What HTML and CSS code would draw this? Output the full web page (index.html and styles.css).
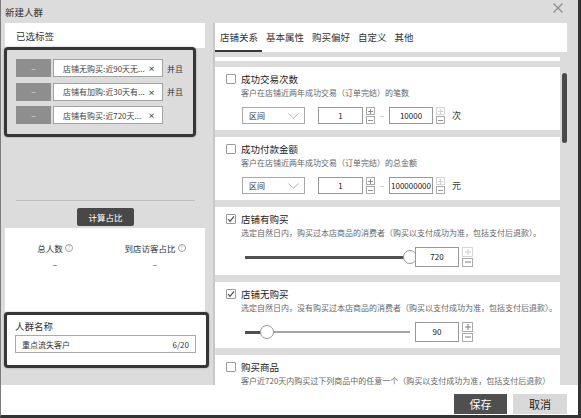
FILE: index.html
```html
<!DOCTYPE html>
<html lang="zh-CN">
<head>
<meta charset="utf-8">
<title>新建人群</title>
<link rel="stylesheet" href="styles.css">
</head>
<body>
<div class="window">
  <header class="titlebar">
    <span class="title">新建人群</span>
    <svg class="close" width="10" height="10" viewBox="0 0 10 10"><path d="M0.5 0.5L9.5 9.5M9.5 0.5L0.5 9.5" stroke="#8a8a8a" stroke-width="1.1" fill="none"/></svg>
  </header>

  <div class="main">
    <aside class="left">
      <div class="left-head">已选标签</div>
      <div class="tags-area">
        <div class="tag-box">
          <div class="tag-row">
            <span class="minus">–</span>
            <span class="tag"><span>店铺无购买:近90天无...</span><b class="x">×</b></span>
            <span class="and">并且</span>
          </div>
          <div class="tag-row">
            <span class="minus">–</span>
            <span class="tag"><span>店铺有加购:近30天有...</span><b class="x">×</b></span>
            <span class="and">并且</span>
          </div>
          <div class="tag-row">
            <span class="minus">–</span>
            <span class="tag"><span>店铺有购买:近720天...</span><b class="x">×</b></span>
          </div>
        </div>
        <div class="calc">
          <button class="calc-btn">计算占比</button>
        </div>
      </div>
      <div class="stats">
        <div class="stat">
          <div class="stat-label">总人数 <span class="help">?</span></div>
          <div class="stat-val">–</div>
        </div>
        <div class="stat">
          <div class="stat-label">到店访客占比 <span class="help">?</span></div>
          <div class="stat-val">–</div>
        </div>
      </div>
      <div class="name-box">
        <div class="name-label">人群名称</div>
        <div class="name-input"><span>重点流失客户</span><span>6/20</span></div>
      </div>
    </aside>

    <section class="right">
      <nav class="tabs">
        <span class="tab active">店铺关系</span>
        <span class="tab">基本属性</span>
        <span class="tab">购买偏好</span>
        <span class="tab">自定义</span>
        <span class="tab">其他</span>
      </nav>
      <div class="scroller">
        <div class="cards">
          <div class="tail"></div>

          <div class="card c1">
            <div class="card-head"><span class="cb"></span><span class="card-title">成功交易次数</span></div>
            <div class="desc">客户在店铺近两年成功交易（订单完结）的笔数</div>
            <div class="ctrl">
              <span class="select"><span>区间</span><svg width="11" height="6" viewBox="0 0 11 6"><polyline points="0.5,0.5 5.5,5.2 10.5,0.5" fill="none" stroke="#a8a8a8" stroke-width="0.9"/></svg></span>
              <span class="num first">1</span>
              <span class="spin"><span class="sb"><svg viewBox="0 0 5 5"><path d="M0 2.5H5M2.5 0V5" stroke="currentColor" stroke-width="0.8"/></svg></span><span class="sb"><svg viewBox="0 0 5 5"><path d="M0 2.5H5" stroke="currentColor" stroke-width="0.8"/></svg></span></span>
              <span class="dash">–</span>
              <span class="num">10000</span>
              <span class="spin"><span class="sb off"><svg viewBox="0 0 5 5"><path d="M0 2.5H5M2.5 0V5" stroke="currentColor" stroke-width="0.8"/></svg></span><span class="sb"><svg viewBox="0 0 5 5"><path d="M0 2.5H5" stroke="currentColor" stroke-width="0.8"/></svg></span></span>
              <span class="unit">次</span>
            </div>
          </div>

          <div class="card c2">
            <div class="card-head"><span class="cb"></span><span class="card-title">成功付款金额</span></div>
            <div class="desc">客户在店铺近两年成功交易（订单完结）的总金额</div>
            <div class="ctrl">
              <span class="select"><span>区间</span><svg width="11" height="6" viewBox="0 0 11 6"><polyline points="0.5,0.5 5.5,5.2 10.5,0.5" fill="none" stroke="#a8a8a8" stroke-width="0.9"/></svg></span>
              <span class="num first">1</span>
              <span class="spin"><span class="sb"><svg viewBox="0 0 5 5"><path d="M0 2.5H5M2.5 0V5" stroke="currentColor" stroke-width="0.8"/></svg></span><span class="sb"><svg viewBox="0 0 5 5"><path d="M0 2.5H5" stroke="currentColor" stroke-width="0.8"/></svg></span></span>
              <span class="dash">–</span>
              <span class="num">100000000</span>
              <span class="spin"><span class="sb off"><svg viewBox="0 0 5 5"><path d="M0 2.5H5M2.5 0V5" stroke="currentColor" stroke-width="0.8"/></svg></span><span class="sb"><svg viewBox="0 0 5 5"><path d="M0 2.5H5" stroke="currentColor" stroke-width="0.8"/></svg></span></span>
              <span class="unit">元</span>
            </div>
          </div>

          <div class="card c3">
            <div class="card-head"><span class="cb on"><svg width="8" height="8" viewBox="0 0 8 8"><polyline points="1,4 3,6.3 7,1.3" fill="none" stroke="#444" stroke-width="1.1"/></svg></span><span class="card-title">店铺有购买</span></div>
            <div class="desc">选定自然日内，购买过本店商品的消费者（购买以支付成功为准，包括支付后退款）。</div>
            <div class="slider">
              <span class="track"><span class="fill" style="width:100%"></span><span class="knob" style="left:100%"></span></span>
              <span class="sl-input">720</span>
              <span class="spin big"><span class="sb off"><svg viewBox="0 0 5 5"><path d="M0 2.5H5M2.5 0V5" stroke="currentColor" stroke-width="0.8"/></svg></span><span class="sb"><svg viewBox="0 0 5 5"><path d="M0 2.5H5" stroke="currentColor" stroke-width="0.8"/></svg></span></span>
            </div>
          </div>

          <div class="card c4">
            <div class="card-head"><span class="cb on"><svg width="8" height="8" viewBox="0 0 8 8"><polyline points="1,4 3,6.3 7,1.3" fill="none" stroke="#444" stroke-width="1.1"/></svg></span><span class="card-title">店铺无购买</span></div>
            <div class="desc">选定自然日内，没有购买过本店商品的消费者（购买以支付成功为准，包括支付后退款）。</div>
            <div class="slider">
              <span class="track"><span class="fill" style="width:17px"></span><span class="knob" style="left:22px"></span></span>
              <span class="sl-input">90</span>
              <span class="spin big"><span class="sb"><svg viewBox="0 0 5 5"><path d="M0 2.5H5M2.5 0V5" stroke="currentColor" stroke-width="0.8"/></svg></span><span class="sb"><svg viewBox="0 0 5 5"><path d="M0 2.5H5" stroke="currentColor" stroke-width="0.8"/></svg></span></span>
            </div>
          </div>

          <div class="card c5">
            <div class="card-head"><span class="cb"></span><span class="card-title">购买商品</span></div>
            <div class="desc">客户近720天内购买过下列商品中的任意一个（购买以支付成功为准，包括支付后退款）</div>
          </div>
        </div>
        <div class="thumb"></div>
      </div>
    </section>
  </div>

  <footer class="footer">
    <button class="btn save">保存</button>
    <button class="btn cancel">取消</button>
  </footer>
</div>
</body>
</html>
```

FILE: styles.css
```css
* { box-sizing: border-box; margin: 0; padding: 0; }

body {
  width: 581px;
  height: 418px;
  overflow: hidden;
  font-family: "Noto Sans CJK SC", "Noto Sans", sans-serif;
  color: #333;
  background: #dcdcdc;
}

.window {
  width: 581px;
  height: 418px;
  display: flex;
  flex-direction: column;
  background: #dcdcdc;
  border-left: 1px solid #7c7c7c;
  border-right: 3px solid #333;
  border-bottom: 3px solid #333;
}

/* title bar */
.titlebar {
  height: 23px;
  flex-shrink: 0;
  display: flex;
  justify-content: space-between;
  align-items: center;
  padding: 0 15px 0 4px;
  font-size: 9.5px;
  color: #333;
}
.close { align-self: flex-start; margin-top: 3px; }

/* main */
.main {
  flex: 1;
  display: flex;
  min-height: 0;
}

/* left panel */
.left {
  width: 200px;
  margin-left: 4px;
  display: flex;
  flex-direction: column;
}
.left-head {
  height: 25px;
  background: #fff;
  padding-left: 11px;
  font-size: 9.5px;
  line-height: 26px;
  color: #333;
}
.tags-area {
  height: 180px;
  display: flex;
  flex-direction: column;
}
.tag-box {
  margin: -1px 9px 0 -1px;
  height: 90px;
  border: 3px solid #363636;
  border-radius: 4px;
  box-shadow: 0 0 2px rgba(0,0,0,0.35);
  padding: 9px 0 0 9px;
  display: flex;
  flex-direction: column;
  gap: 5.5px;
}
.tag-row {
  display: flex;
  align-items: center;
  height: 18px;
}
.minus {
  width: 35px;
  height: 18px;
  background: #8e8e8e;
  color: #e8e8e8;
  font-size: 8px;
  display: flex;
  align-items: center;
  justify-content: center;
}
.tag {
  margin-left: 2px;
  width: 110px;
  height: 18px;
  background: #fff;
  border: 1px solid #a3a3a3;
  display: flex;
  align-items: center;
  justify-content: space-between;
  padding: 0 7px 0 9px;
  font-size: 8px;
  white-space: nowrap;
  color: #444;
}
.x { font-size: 7px; font-weight: bold; color: #444; }
.and { margin-left: 4px; font-size: 8px; color: #333; }

.calc {
  margin: 63px 10px 0 11px;
  border-top: 1px solid #bdbdbd;
  padding-top: 7px;
  display: flex;
  justify-content: center;
}
.calc-btn {
  width: 57px;
  height: 18px;
  border: 0;
  border-radius: 2px;
  background: #484848;
  color: #fff;
  font-family: inherit;
  font-size: 8.5px;
}

.stats {
  height: 84px;
  background: #fff;
  display: flex;
  padding-top: 14px;
}
.stat { width: 100px; text-align: center; }
.stat-label {
  font-size: 8.5px;
  line-height: 12px;
  display: flex;
  align-items: center;
  justify-content: center;
  gap: 2px;
  color: #333;
}
.help {
  width: 8px;
  height: 8px;
  border: 1px solid #a0a0a0;
  border-radius: 50%;
  font-size: 5.5px;
  line-height: 6px;
  color: #999;
  text-align: center;
}
.stat-val {
  margin-top: 5px;
  font-size: 9px;
  line-height: 12px;
  color: #555;
}

.name-box {
  height: 56px;
  margin: 0 -4px 0 -1px;
  border: 3px solid #363636;
  border-radius: 4px;
  box-shadow: 0 0 2px rgba(0,0,0,0.35);
  background: #fff;
  padding: 5px 10px 0 8px;
}
.name-label { font-size: 9.5px; line-height: 12px; color: #333; }
.name-input {
  margin-top: 3px;
  height: 18px;
  border: 1px solid #aaa;
  display: flex;
  align-items: center;
  justify-content: space-between;
  padding: 0 6px;
  font-size: 8px;
  color: #333;
}

/* right panel */
.right {
  flex: 1;
  margin-left: 8px;
  border-left: 2px solid #c8c8c8;
  display: flex;
  flex-direction: column;
  min-width: 0;
}
.tabs {
  width: 352px;
  height: 29px;
  flex-shrink: 0;
  background: #fff;
  display: flex;
}
.tab {
  padding: 0 4px;
  font-size: 9.5px;
  line-height: 29px;
  color: #333;
  white-space: nowrap;
}
.tab:first-child { padding-left: 5px; }
.tab.active { box-shadow: inset 0 -2px 0 #3a3a3a; }

.scroller {
  flex: 1;
  position: relative;
  overflow: hidden;
}
.cards {
  width: 345px;
  padding-top: 5px;
  display: flex;
  flex-direction: column;
}
.tail { height: 4px; background: #fff; margin-bottom: 6px; flex-shrink: 0; }
.card {
  background: #fff;
  flex-shrink: 0;
  margin-bottom: 7px;
  padding-top: 5px;
}
.c1, .c2 { height: 63px; }
.c3 { height: 68px; }
.c4 { height: 66px; }
.c5 { height: 60px; }

.card-head {
  display: flex;
  align-items: center;
  height: 14px;
  padding-left: 11px;
}
.cb {
  width: 10px;
  height: 10px;
  border: 1px solid #9c9c9c;
  border-radius: 1px;
  background: #fff;
  margin-right: 5px;
  display: flex;
  align-items: center;
  justify-content: center;
}
.card-title {
  font-size: 9.5px;
  line-height: 14px;
  color: #222;
}
.desc {
  margin-top: 1px;
  padding-left: 26px;
  font-size: 8px;
  line-height: 12px;
  color: #666;
  white-space: nowrap;
}

.ctrl {
  margin-top: 8px;
  padding-left: 27px;
  height: 17px;
  display: flex;
  align-items: center;
}
.select {
  width: 63px;
  height: 17px;
  border: 1px solid #a8a8a8;
  display: flex;
  align-items: center;
  justify-content: space-between;
  padding: 0 5px 0 6px;
  font-size: 8px;
  color: #333;
}
.num {
  width: 44px;
  height: 17px;
  border: 1px solid #999;
  font-size: 8px;
  line-height: 15px;
  text-align: center;
  color: #222;
}
.num.first { width: 45px; margin-left: 13px; }
.spin {
  margin-left: 3px;
  width: 9px;
  display: flex;
  flex-direction: column;
  gap: 1px;
}
.sb {
  height: 8px;
  border: 1px solid #aaa;
  background: #fff;
  color: #777;
  display: flex;
  align-items: center;
  justify-content: center;
}
.sb svg { width: 5px; height: 5px; display: block; }
.sb.off { border-color: #d6d6d6; color: #c8c8c8; }
.dash { width: 14px; text-align: center; font-size: 8px; color: #aaa; }
.unit { margin-left: 7px; font-size: 9px; color: #333; }

.slider {
  margin-top: 8px;
  padding-left: 30px;
  height: 20px;
  display: flex;
  align-items: center;
}
.track {
  width: 165px;
  height: 2px;
  background: #a6a6a6;
  position: relative;
}
.fill {
  position: absolute;
  left: 0;
  top: -0.5px;
  height: 3px;
  background: #505050;
}
.knob {
  position: absolute;
  top: 50%;
  width: 14px;
  height: 14px;
  border-radius: 50%;
  background: #fff;
  border: 1px solid #9a9a9a;
  transform: translate(-50%, -50%);
}
.sl-input {
  position: relative;
  width: 44px;
  height: 20px;
  margin-left: 5px;
  border: 1px solid #999;
  background: #fff;
  font-size: 8px;
  line-height: 18px;
  text-align: center;
  color: #222;
}
.spin.big { width: 11px; }
.spin.big .sb { height: 9.5px; }
.spin.big .sb svg { width: 6px; height: 6px; }

.thumb {
  position: absolute;
  left: 347px;
  top: 21px;
  width: 5px;
  height: 70px;
  border-radius: 3px;
  background: #4a4a4a;
}

/* footer */
.footer {
  height: 30px;
  flex-shrink: 0;
  background: #fff;
  display: flex;
  justify-content: flex-end;
  align-items: flex-start;
  gap: 6px;
  padding: 9px 11px 0 0;
}
.btn {
  height: 20px;
  border: 0;
  font-family: inherit;
  font-size: 11px;
}
.save { width: 53px; background: #4f4f4f; color: #fff; }
.cancel { width: 54px; background: #d9d9d9; color: #222; }
```
